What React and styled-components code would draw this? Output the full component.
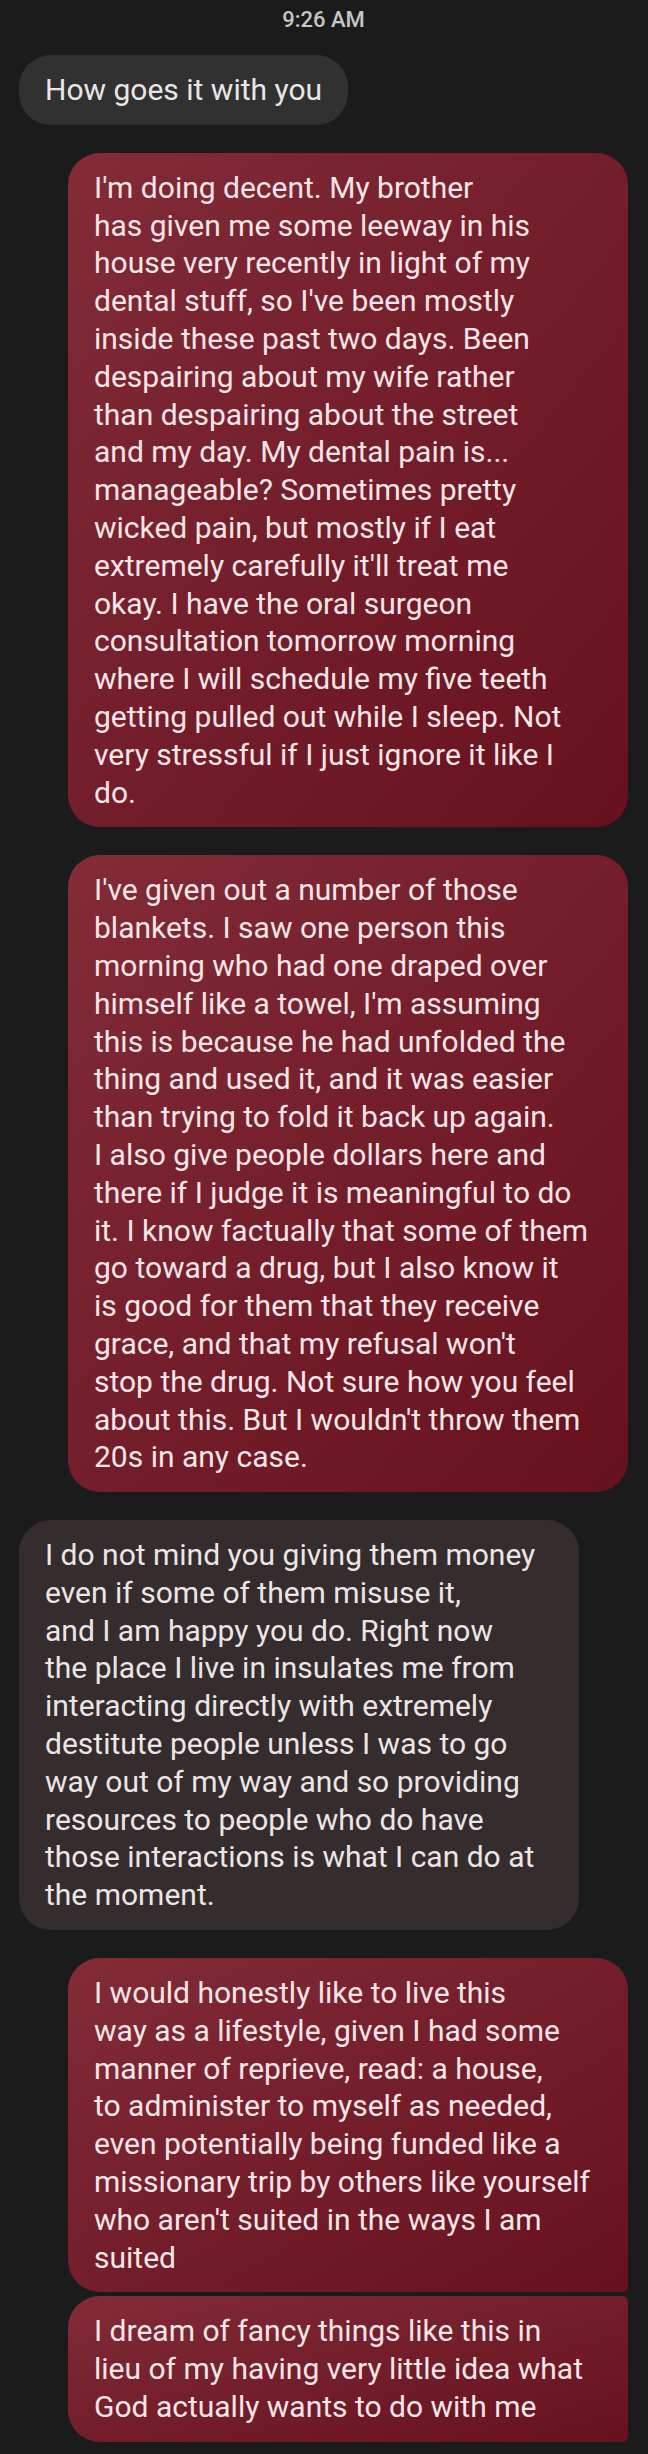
import React from "react";
import styled, { createGlobalStyle, css } from "styled-components";

const GlobalStyle = createGlobalStyle`
  html, body {
    margin: 0;
    padding: 0;
    background: #1b1b1b;
  }
  body {
    font-family: Roboto, "Noto Sans", "Liberation Sans", sans-serif;
    -webkit-font-smoothing: antialiased;
  }
`;

const Thread = styled.main`
  display: flex;
  flex-direction: column;
  padding: 7px 20px 0 19px;
  min-height: 2454px;
  box-sizing: border-box;
  background: #1b1b1b;
`;

const Timestamp = styled.div`
  align-self: center;
  font-size: 22px;
  line-height: 26px;
  font-weight: 500;
  color: #c6c6c6;
  margin-bottom: 22px;
`;

const Bubble = styled.div`
  box-sizing: border-box;
  max-width: 560px;
  width: ${(p) => (p.$fill ? "560px" : "auto")};
  padding: 16px 26px;
  font-size: 30px;
  line-height: 37.8px;
  white-space: pre;
  border-radius: 32px;
  margin-top: ${(p) => (p.$grouped ? "4px" : "28px")};

  ${(p) =>
    p.$mine
      ? css`
          align-self: flex-end;
          color: #f4e6e8;
          background: linear-gradient(to bottom right, #832c38 0%, #741d2b 50%, #67111f 100%);
        `
      : css`
          align-self: flex-start;
          color: #ebe6e6;
          background: ${p.$tone || "#313131"};
        `}

  ${(p) =>
    p.$tailTop &&
    css`
      border-top-right-radius: 6px;
    `}
  ${(p) =>
    p.$tailBottom &&
    css`
      border-bottom-right-radius: 6px;
    `}

  &:nth-child(2) {
    margin-top: 0;
  }
`;

const messages = [
  { mine: false, lines: ["How goes it with you"] },
  {
    mine: true,
    lines: [
      "I'm doing decent. My brother",
      "has given me some leeway in his",
      "house very recently in light of my",
      "dental stuff, so I've been mostly",
      "inside these past two days. Been",
      "despairing about my wife rather",
      "than despairing about the street",
      "and my day. My dental pain is...",
      "manageable? Sometimes pretty",
      "wicked pain, but mostly if I eat",
      "extremely carefully it'll treat me",
      "okay. I have the oral surgeon",
      "consultation tomorrow morning",
      "where I will schedule my five teeth",
      "getting pulled out while I sleep. Not",
      "very stressful if I just ignore it like I",
      "do.",
    ],
  },
  {
    mine: true,
    lines: [
      "I've given out a number of those",
      "blankets. I saw one person this",
      "morning who had one draped over",
      "himself like a towel, I'm assuming",
      "this is because he had unfolded the",
      "thing and used it, and it was easier",
      "than trying to fold it back up again.",
      "I also give people dollars here and",
      "there if I judge it is meaningful to do",
      "it. I know factually that some of them",
      "go toward a drug, but I also know it",
      "is good for them that they receive",
      "grace, and that my refusal won't",
      "stop the drug. Not sure how you feel",
      "about this. But I wouldn't throw them",
      "20s in any case.",
    ],
  },
  {
    mine: false,
    tone: "#342c2d",
    lines: [
      "I do not mind you giving them money",
      "even if some of them misuse it,",
      "and I am happy you do. Right now",
      "the place I live in insulates me from",
      "interacting directly with extremely",
      "destitute people unless I was to go",
      "way out of my way and so providing",
      "resources to people who do have",
      "those interactions is what I can do at",
      "the moment.",
    ],
  },
  {
    mine: true,
    tailBottom: true,
    lines: [
      "I would honestly like to live this",
      "way as a lifestyle, given I had some",
      "manner of reprieve, read: a house,",
      "to administer to myself as needed,",
      "even potentially being funded like a",
      "missionary trip by others like yourself",
      "who aren't suited in the ways I am",
      "suited",
    ],
  },
  {
    mine: true,
    grouped: true,
    tailTop: true,
    tailBottom: true,
    lines: [
      "I dream of fancy things like this in",
      "lieu of my having very little idea what",
      "God actually wants to do with me",
    ],
  },
];

export default function App() {
  return (
    <>
      <GlobalStyle />
      <Thread>
        <Timestamp>9:26 AM</Timestamp>
        {messages.map((m, i) => (
          <Bubble
            key={i}
            $mine={m.mine}
            $tone={m.tone}
            $fill={m.lines.length > 1}
            $grouped={m.grouped}
            $tailTop={m.tailTop}
            $tailBottom={m.tailBottom}
          >
            {m.lines.join("\n")}
          </Bubble>
        ))}
      </Thread>
    </>
  );
}
